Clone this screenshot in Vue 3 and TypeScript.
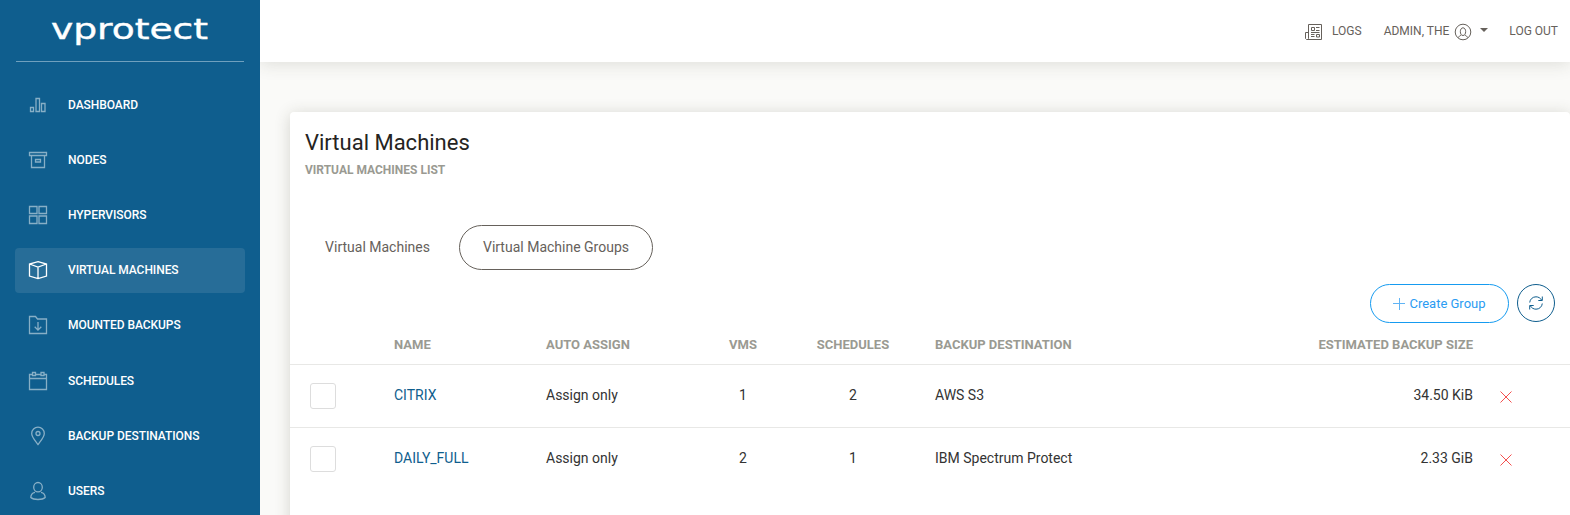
<script setup lang="ts">
interface NavItem {
  label: string
  icon: string
  active?: boolean
}

interface Group {
  name: string
  assign: string
  vms: number
  schedules: number
  destination: string
  size: string
}

const nav: NavItem[] = [
  { label: 'Dashboard', icon: 'M2.5 12.5h3v4h-3zM8 3.500h3.500v13h-3.500zM13.500 8.500h3.500v8h-3.500z' },
  { label: 'Nodes', icon: 'M1.5 2.5h17v3h-17zM3.5 5.5v12h13v-12M7.5 9.5h5v2.5h-5z' },
  { label: 'Hypervisors', icon: 'M1.5 1.5h7.5v7h-7.500zM11 1.500h7.500v7h-7.500zM1.500 11h7.500v7.500h-7.500zM11 11h7.500v7.500h-7.500z' },
  { label: 'Virtual Machines', icon: 'M10 1.700l8.500 2.300v12l-8.500 2.500-8.500-2.500v-12zM1.500 4l8.500 3 8.500-3M10 7v11.500', active: true },
  { label: 'Mounted Backups', icon: 'M1.500 1.500h6l2 2.500h9v14.500h-17zM10 7v8M6.700 11.800l3.300 3.300 3.300-3.300' },
  { label: 'Schedules', icon: 'M4.500 3.500h-3v15h17v-15h-2.500M7.500 3.500h5.500M1.500 7.500h17M4.500 1.500h3v3h-3zM13 1.500h3v3h-3z' },
  { label: 'Backup Destinations', icon: 'M10 18.500c-2.500-3.500-6.300-7.300-6.300-11a6.300 6.300 0 0 1 12.600 0c0 3.700-3.800 7.500-6.300 11zM10 5.500a2 2 0 1 0 0 4 2 2 0 0 0 0-4z' },
  { label: 'Users', icon: 'M10 1.500a4.300 4.700 0 1 0 0 9.400 4.300 4.700 0 0 0 0-9.400zM7 11.300c-2.500 .6-4.200 2.500-4.200 5.200 1.400 1.300 4 2 7.200 2s5.800-.7 7.200-2c0-2.700-1.700-4.600-4.200-5.200' },
]

const groups: Group[] = [
  { name: 'CITRIX', assign: 'Assign only', vms: 1, schedules: 2, destination: 'AWS S3', size: '34.50 KiB' },
  { name: 'DAILY_FULL', assign: 'Assign only', vms: 2, schedules: 1, destination: 'IBM Spectrum Protect', size: '2.33 GiB' },
]
</script>

<template>
  <div class="app">
    <aside class="sidebar">
      <div class="brand">
        <svg width="160" height="34" viewBox="0 0 160 34" role="img" aria-label="vprotect">
          <text x="0" y="25.500" textLength="157" lengthAdjust="spacingAndGlyphs">vprotect</text>
        </svg>
      </div>
      <nav class="menu">
        <a v-for="item in nav" :key="item.label" class="item" :class="{ active: item.active }">
          <svg width="20" height="20" viewBox="0 0 20 20"><path :d="item.icon" /></svg>
          <span>{{ item.label }}</span>
        </a>
      </nav>
    </aside>

    <div class="main">
      <header class="topbar">
        <a class="logs">
          <svg width="18" height="18" viewBox="0 0 18 18">
            <path d="M3.500 1.500h13v15h-15l-1-1v-6h3M3.500 1.500v14l-1 1M6.500 4.500h3v3h-3zM11 4.500h3.500M11 7.500h3.500M6 9.500h8.500M6 11.500h3.500M6 13.500h3.500M11.500 11.500h3v2.500h-3z" />
          </svg>
          <span>Logs</span>
        </a>
        <a class="user">
          <span>Admin, The</span>
          <svg width="18" height="18" viewBox="0 0 18 18">
            <path d="M9 1.200a7.800 7.800 0 1 0 0 15.600 7.800 7.800 0 0 0 0-15.600zM9 4.800c-3.600 0-3.500 7.700 0 7.700s3.600-7.700 0-7.700zM7.300 12.300c-1.500.3-2.400 1-2.800 2.300M10.700 12.300c1.500.3 2.400 1 2.800 2.300" />
          </svg>
          <i class="caret"></i>
        </a>
        <a class="logout">Log out</a>
      </header>

      <section class="card">
        <h1>Virtual Machines</h1>
        <p class="subtitle">Virtual Machines List</p>

        <div class="tabs">
          <button class="tab">Virtual Machines</button>
          <button class="tab selected">Virtual Machine Groups</button>
        </div>

        <div class="actions">
          <button class="create">
            <svg width="12" height="12" viewBox="0 0 12 12"><path d="M0 5.500h12M6.500 0v12" /></svg>
            <span>Create Group</span>
          </button>
          <button class="refresh" aria-label="Refresh">
            <svg width="16" height="16" viewBox="0 0 16 16">
              <path d="M1.700 7.500c.3-3.300 3-5.700 6.300-5.700 2.400 0 4.500 1.300 5.600 3.300M14.300 1.500v4h-4M14.300 8.500c-.3 3.300-3 5.700-6.300 5.700-2.400 0-4.500-1.300-5.600-3.300M1.700 14.500v-4h4" />
            </svg>
          </button>
        </div>

        <div class="row head">
          <span></span>
          <span>Name</span>
          <span>Auto assign</span>
          <span class="center">VMs</span>
          <span class="center">Schedules</span>
          <span class="dest">Backup destination</span>
          <span class="right">Estimated backup size</span>
          <span></span>
        </div>
        <div v-for="group in groups" :key="group.name" class="row">
          <span class="checkbox"></span>
          <a class="cell name">{{ group.name }}</a>
          <span class="cell">{{ group.assign }}</span>
          <span class="cell center">{{ group.vms }}</span>
          <span class="cell center">{{ group.schedules }}</span>
          <span class="cell dest">{{ group.destination }}</span>
          <span class="cell right">{{ group.size }}</span>
          <svg class="remove" width="12" height="12" viewBox="0 0 12 12"><path d="M.5 .5l11 11M11.500 .5l-11 11" /></svg>
        </div>
      </section>
    </div>
  </div>
</template>

<style>
body {
  overflow: hidden;
}
</style>

<style scoped>
* {
  box-sizing: border-box;
}
.app {
  display: flex;
  width: 1570px;
  height: 515px;
  overflow: hidden;
  background: #fafaf8;
  color: #333;
  font-family: Roboto, "Liberation Sans", sans-serif;
  font-size: 14px;
}
svg {
  flex: none;
  fill: none;
  stroke: currentColor;
  stroke-width: 1;
}
.sidebar {
  position: relative;
  z-index: 1;
  width: 260px;
  flex: none;
  background: #0f5e8e;
  color: #fff;
}
.brand {
  height: 62px;
  margin: 0 16px;
  padding: 13px 0 0 35px;
  border-bottom: 1px solid #6fa0be;
}
.brand text {
  font: 28px "DejaVu Sans", sans-serif;
  fill: #fff;
  stroke: #fff;
  stroke-width: .4;
}
.menu {
  display: flex;
  flex-direction: column;
  gap: 10.120px;
  padding: 20.500px 15px 0;
}
.item {
  display: flex;
  align-items: center;
  height: 45px;
  flex: none;
  padding-left: 13px;
  border-radius: 4px;
  font-size: 12px;
  font-weight: 500;
  letter-spacing: -.06px;
  text-transform: uppercase;
}
.item svg {
  margin-right: 20px;
  opacity: .5;
  stroke-width: 1.300;
}
.item.active {
  background: #276d98;
}
.item.active svg {
  opacity: 1;
}
.main {
  flex: 1;
  min-width: 0;
}
.topbar {
  display: flex;
  justify-content: flex-end;
  align-items: center;
  height: 62px;
  padding-right: 12px;
  background: #fff;
  box-shadow: 0 2px 16px rgba(60, 60, 40, .15);
  color: #66615b;
  font-size: 12px;
  text-transform: uppercase;
}
.topbar a {
  display: flex;
  align-items: center;
}
.topbar svg {
  margin-top: 2px;
}
.logs span {
  margin-left: 9px;
}
.user {
  margin: 0 21px 0 22px;
}
.user svg {
  margin-left: 5px;
}
.caret {
  margin: 0 0 3px 8px;
  border: 4px solid transparent;
  border-top-color: currentColor;
  border-bottom: 0;
}
.card {
  height: 460px;
  margin: 50px 0 0 30px;
  padding-top: 17px;
  border-radius: 4px;
  background: #fff;
  box-shadow: 0 2px 16px rgba(60, 60, 40, .2);
}
h1 {
  margin: 0 0 0 15px;
  font-size: 22px;
  font-weight: 400;
  line-height: 28px;
  color: #252422;
}
.subtitle {
  margin: 5px 0 0 15px;
  font-size: 12px;
  font-weight: 700;
  line-height: 16px;
  text-transform: uppercase;
  color: #9a9a92;
}
button {
  display: flex;
  align-items: center;
  justify-content: center;
  padding: 0;
  border: 1px solid transparent;
  background: none;
  font: inherit;
}
.tabs {
  display: flex;
  gap: 5px;
  margin: 47px 0 0 11px;
}
.tab {
  width: 153px;
  height: 45px;
  padding-bottom: 2px;
  border-radius: 23px;
  color: #66615b;
}
.tab.selected {
  width: 194px;
  border-color: #66615b;
}
.actions {
  display: flex;
  gap: 8px;
  justify-content: flex-end;
  margin: 14px 15px 0 0;
}
.create {
  width: 139px;
  height: 39px;
  gap: 4px;
  border-color: #169bf0;
  border-radius: 20px;
  color: #2b9cf2;
  font-size: 13px;
}
.create svg {
  opacity: .75;
}
.refresh {
  width: 38px;
  height: 38px;
  border-color: #0f5e8e;
  border-radius: 50%;
  color: #0f5e8e;
}
.row {
  display: grid;
  grid-template-columns: 84px 152px 122px 110px 110px 220px 365px 97px;
  align-items: center;
  height: 63px;
  padding-left: 20px;
  border-top: 1px solid #e8e8e6;
}
.row.head {
  height: 41px;
  padding-top: 2px;
  border: 0;
  font-size: 13px;
  font-weight: 700;
  text-transform: uppercase;
  color: #9a9a92;
}
.cell {
  padding-bottom: 2px;
}
.center {
  padding-left: 40px;
  margin-right: -40px;
  text-align: center;
  transform: translateX(-20px);
}
.dest {
  padding-left: 47px;
}
.right {
  text-align: right;
}
.checkbox {
  width: 26px;
  height: 26px;
  border: 1px solid #ddd;
  border-radius: 3px;
}
.name {
  color: #0f5e8e;
}
.remove {
  margin: 1px 0 0 27px;
  color: #f4504f;
}
</style>
